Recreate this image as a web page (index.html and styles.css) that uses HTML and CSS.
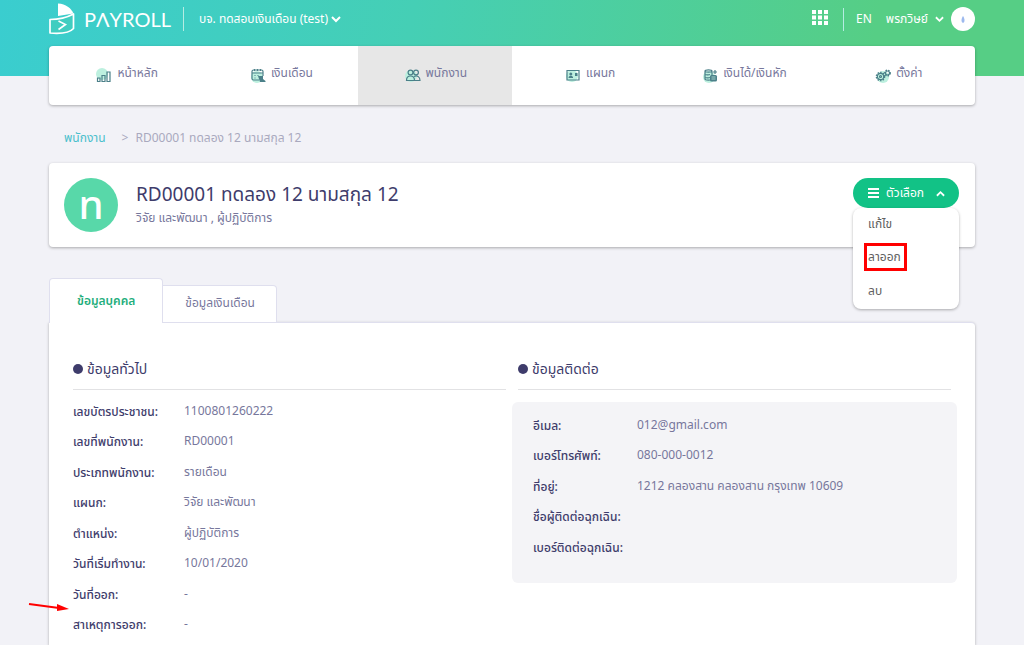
FILE: index.html
```html
<!DOCTYPE html>
<html lang="th">
<head>
<meta charset="utf-8">
<meta name="viewport" content="width=device-width, initial-scale=1">
<title>Payroll</title>
<link rel="stylesheet" href="styles.css">
</head>
<body>
<div class="page">
  <header class="topbar">
    <a class="brand" href="#">
      <svg class="brand-mark" viewBox="0 0 26 32" width="26" height="32" aria-hidden="true">
        <path d="M9 12V.5C17 1 22 5 24.500 10.500L9 13z" fill="#fff"/>
        <path d="M1 16.500C9 16.500 17 15 24.500 11v14.500C21 29.500 13 31 1 30z" fill="#40cdc0" stroke="#fff" stroke-width="1.700" stroke-linejoin="round"/>
        <path d="M9.500 18l7 3.500-7 5" fill="none" stroke="#fff" stroke-width="1.600"/>
      </svg>
      <span class="brand-name">PΛYROLL</span>
    </a>
    <button class="company" type="button">บจ. ทดสอบเงินเดือน (test)
      <svg viewBox="0 0 10 7" width="10" height="7" aria-hidden="true"><path d="M1 1l4 4 4-4" class="chev"/></svg>
    </button>
    <div class="top-tools">
      <button class="apps" type="button" aria-label="Apps">
        <svg viewBox="0 0 16 15" width="16" height="15" aria-hidden="true"><path d="M0 0h4v4H0zM6 0h4v4H6zM12 0h4v4h-4zM0 5.500h4v4H0zM6 5.500h4v4H6zM12 5.500h4v4h-4zM0 11h4v4H0zM6 11h4v4H6zM12 11h4v4h-4z" fill="#fff"/></svg>
      </button>
      <button class="lang" type="button">EN</button>
      <button class="user" type="button">พรภวิษย์
        <svg viewBox="0 0 10 7" width="9" height="7" aria-hidden="true"><path d="M1 1l4 4 4-4" class="chev"/></svg>
        <svg viewBox="0 0 24 24" width="24" height="24" aria-hidden="true"><circle cx="12" cy="12" r="12" fill="#fff"/><path d="M12 9c2 3 2 6 0 7-2-1-2-4 0-7z" fill="#9db9ee"/></svg>
      </button>
    </div>
  </header>

  <nav class="nav">
    <a href="#"><svg class="nav-icon" viewBox="0 0 16 16" aria-hidden="true"><circle class="glow" cx="6" cy="7" r="6"/><path class="ln" d="M1.500 11h2.500v3.500H1.500zM6 8.500h3v6H6zM11 5h3v9.500h-3z"/></svg>หน้าหลัก</a>
    <a href="#"><svg class="nav-icon" viewBox="0 0 16 16" aria-hidden="true"><circle class="glow" cx="7" cy="10" r="6"/><path class="ln" d="M9 13H3.500q-1.500 0-1.500-1.500V4.500Q2 3 3.500 3h8Q13 3 13 4.500V9M2 6h11M4.500 2v2M7.500 2v2M10.500 2v2M4.500 8.500h1M7.500 8.500h1M4.500 11h1"/><path class="fill" d="M8 9h5v3l2.500 2v1H10z"/></svg>เงินเดือน</a>
    <a class="active" href="#"><svg class="nav-icon" viewBox="0 0 16 16" aria-hidden="true"><circle class="glow" cx="6" cy="9" r="6"/><circle class="ln" cx="5.500" cy="5.500" r="2.400"/><circle class="ln" cx="11" cy="5.500" r="2.400"/><path class="ln" d="M1.500 13.500c0-3 1.500-4.500 4-4.500s4 1.500 4 4.500zM9 9.500c3.500-1.500 6 .5 6 4H9.500"/></svg>พนักงาน</a>
    <a href="#"><svg class="nav-icon" viewBox="0 0 16 16" aria-hidden="true"><circle class="glow" cx="7" cy="9" r="6"/><path class="ln" d="M2 3.500h12v9.500H2z"/><circle class="fill" cx="5.800" cy="7" r="1.500"/><path class="fill" d="M3.500 11c0-3 4.600-3 4.600 0zM10 6h2.500v3H10z"/></svg>แผนก</a>
    <a href="#"><svg class="nav-icon" viewBox="0 0 16 16" aria-hidden="true"><circle class="glow" cx="7" cy="10" r="6"/><path class="ln" d="M3 4c0-1.500 7-1.500 7 0v8c0 1.500-7 1.500-7 0zM3 4c0 1.500 7 1.500 7 0M3 7c0 1 4 1 5 .500M3 10c0 1 4 1 5 .500M11 5h4M13 3v4"/><rect class="fill" x="8" y="8" width="7" height="6.500" rx="1.500"/><path d="M9.500 10h4M9.500 12h4" stroke="#b6e4dc" stroke-width=".8"/></svg>เงินได้/เงินหัก</a>
    <a href="#"><svg class="nav-icon" viewBox="0 0 16 16" aria-hidden="true"><circle class="glow" cx="8" cy="10" r="6"/><circle class="cog" cx="5.500" cy="9.500" r="4.200"/><circle class="ln" cx="5.500" cy="9.500" r="3.200"/><circle class="ln" cx="5.500" cy="9.500" r="1"/><circle class="cog" cx="12.500" cy="6" r="2.800"/><circle class="ln" cx="12.500" cy="6" r="2"/></svg>ตั้งค่า</a>
  </nav>

  <div class="crumbs"><a href="#">พนักงาน</a><span class="sep">&gt;</span><span>RD00001 ทดลอง 12 นามสกุล 12</span></div>

  <section class="profile">
    <div class="avatar">n</div>
    <div class="who">
      <h1>RD00001 ทดลอง 12 นามสกุล 12</h1>
      <p>วิจัย และพัฒนา , ผู้ปฏิบัติการ</p>
    </div>
    <div class="options">
      <button class="options-btn" type="button">
        <svg viewBox="0 0 11 10" width="11" height="10" aria-hidden="true"><path d="M0 1h11M0 5h11M0 9h11" stroke="#fff" stroke-width="2"/></svg>
        ตัวเลือก
        <svg class="up" viewBox="0 0 10 7" width="9" height="7" aria-hidden="true"><path d="M1 6l4-4 4 4" class="chev"/></svg>
      </button>
      <div class="menu">
        <button type="button">แก้ไข</button>
        <button class="marked" type="button">ลาออก</button>
        <button type="button">ลบ</button>
      </div>
    </div>
  </section>

  <div class="tabs">
    <button class="tab on" type="button">ข้อมูลบุคคล</button>
    <button class="tab" type="button">ข้อมูลเงินเดือน</button>
  </div>
  <main class="panel">
    <section>
      <h2>ข้อมูลทั่วไป</h2>
      <dl>
        <dt>เลขบัตรประชาชน:</dt><dd>1100801260222</dd>
        <dt>เลขที่พนักงาน:</dt><dd>RD00001</dd>
        <dt>ประเภทพนักงาน:</dt><dd>รายเดือน</dd>
        <dt>แผนก:</dt><dd>วิจัย และพัฒนา</dd>
        <dt>ตำแหน่ง:</dt><dd>ผู้ปฏิบัติการ</dd>
        <dt>วันที่เริ่มทำงาน:</dt><dd>10/01/2020</dd>
        <dt>วันที่ออก:</dt><dd>-</dd>
        <dt>สาเหตุการออก:</dt><dd>-</dd>
      </dl>
    </section>
    <section>
      <h2>ข้อมูลติดต่อ</h2>
      <dl class="contact">
        <dt>อีเมล:</dt><dd>012@gmail.com</dd>
        <dt>เบอร์โทรศัพท์:</dt><dd>080-000-0012</dd>
        <dt>ที่อยู่:</dt><dd>1212 คลองสาน คลองสาน กรุงเทพ 10609</dd>
        <dt>ชื่อผู้ติดต่อฉุกเฉิน:</dt><dd></dd>
        <dt>เบอร์ติดต่อฉุกเฉิน:</dt><dd></dd>
      </dl>
    </section>
  </main>
  <svg class="arrow" viewBox="0 0 42 12" width="42" height="12" aria-hidden="true"><path d="M1 3l30 4" stroke="#f00" stroke-width="2"/><path d="M29 3l12 5-12 2z" fill="#f00"/></svg>
</div>
</body>
</html>
```

FILE: styles.css
```css
* { box-sizing: border-box; }
body {
  margin: 0;
  background: #f2f2f7 linear-gradient(100deg, #3acdcf, #45cfb5 40%, #56ce85 85%) no-repeat;
  background-size: 100% 76px;
  color: #77779c;
  font: 300 12px/20px "Noto Sans", "Noto Sans Thai", sans-serif;
}
a { color: inherit; text-decoration: none; }
button { border: 0; background: none; padding: 0; font: inherit; color: inherit; }
.chev { fill: none; stroke: currentColor; stroke-width: 2; }
.page { position: relative; display: flex; flex-direction: column; min-height: 100vh; padding: 0 49px; }

.topbar { display: flex; align-items: center; height: 46px; padding-bottom: 8px; color: #fff; font-weight: 400; }
.brand { display: flex; align-items: center; gap: 9px; padding-right: 12px; border-right: 1px solid #b5ece2; line-height: 23px; }
.brand-mark { margin: -4px 0; }
.brand-name { font-family: Lato, sans-serif; font-size: 20px; }
.company { display: flex; align-items: center; gap: 3px; margin-left: 15px; }
.top-tools { display: flex; align-items: center; margin-left: auto; }
.apps { display: flex; padding: 2px 15px 6px 0; border-right: 1px solid #b5ece2; }
.lang { margin: 0 14px 0 12px; }
.user { display: flex; align-items: center; gap: 7px; }

.nav { display: grid; grid-template-columns: repeat(6, 1fr); height: 59px; overflow: hidden; border-radius: 4px; background: #fff; box-shadow: 0 1px 3px #0000004d; }
.nav a { display: flex; align-items: center; justify-content: center; gap: 5px; padding: 0 0 5px 2px; font-weight: 400; }
.nav .active { background: #e7e7e7; }
.nav-icon { width: 16px; height: 16px; margin-top: 4px; }
.glow { fill: #bdf0df; }
.ln { fill: none; stroke: #4b8089; stroke-width: 1.200; }
.fill { fill: #4b8089; }
.cog { fill: none; stroke: #4b8089; stroke-width: 1.300; stroke-dasharray: 1.500 1.200; }

.crumbs { display: flex; margin: 23px 0 15px; padding-left: 15px; color: #a9a9be; font-weight: 400; }
.crumbs a { color: #4bbfcc; }
.sep { margin: 0 7px 0 16px; }

.profile { display: flex; align-items: center; padding: 15px 16px 15px 15px; border-radius: 4px; background: #fff; box-shadow: 0 1px 3px #0000004d; }
.avatar { width: 54px; height: 54px; border-radius: 50%; background: #58d8a9; color: #fff; font-size: 40px; line-height: 52px; font-weight: 500; text-align: center; }
.who { margin-left: 18px; padding-bottom: 2px; }
h1 { margin: 0; color: #3e3c6b; font-size: 19px; line-height: 28px; font-weight: 400; }
.who p { margin: 0; font-weight: 400; }
.options { position: relative; align-self: flex-start; margin-left: auto; }
.options-btn { display: flex; align-items: center; gap: 7px; height: 30px; padding: 0 14px 0 15px; border-radius: 15px; background: #12c286; color: #fff; font-weight: 400; }
.up { margin-left: 5px; }
.menu { position: absolute; top: 30px; left: 0; right: 0; display: grid; justify-items: start; gap: 6px; padding: 2px 11px 5px; border-radius: 8px; background: #fff; box-shadow: 0 1px 3px #0000004d; color: #606060; font-weight: 400; }
.menu button { height: 27px; padding: 0 4px; }
.menu .marked { height: 28px; padding: 0 3px 0 1px; border: 3px solid #f00; }

.tabs { display: flex; align-items: flex-end; margin-top: 31px; margin-bottom: -1px; z-index: 1; font-weight: 400; }
.tab { height: 38px; padding: 0 21px 2px 22px; border: 1px solid #dfdfee; border-left: 0; background: #fff; border-radius: 0 4px 0 0; }
.tab.on { height: 45px; padding: 0 27px; border-left: 1px solid #dfdfee; border-bottom: 0; border-radius: 4px 4px 0 0; color: #1fae7c; font-weight: 600; }
.panel { display: grid; grid-template-columns: 1fr 1fr; gap: 12px; flex: 1; padding: 32px 24px 0; border-top: 1px solid #dfdfee; border-radius: 0 4px 0 0; background: #fff; box-shadow: 0 1px 3px #0000004d; }
h2 { display: flex; align-items: center; gap: 4px; margin: 0; height: 35px; padding-bottom: 6px; border-bottom: 1px solid #e2e2e4; color: #3e3c6b; font-size: 14px; font-weight: 400; }
h2::before { content: ""; width: 10px; height: 10px; border-radius: 50%; background: #3e3c6b; }
dl { display: grid; grid-template-columns: 111px 1fr; grid-auto-rows: 30px 31px; margin: 7px 0 0; line-height: 30px; white-space: nowrap; }
dt { color: #3e3c6b; font-weight: 500; }
dd { margin: 0; line-height: 28px; font-weight: 400; }
.contact { grid-template-columns: 104px 1fr; margin: 12px -6px 0; padding: 9px 21px 20px; border-radius: 6px; background: #f4f4f7; }
.arrow { position: absolute; left: 28px; top: 601px; }
```
